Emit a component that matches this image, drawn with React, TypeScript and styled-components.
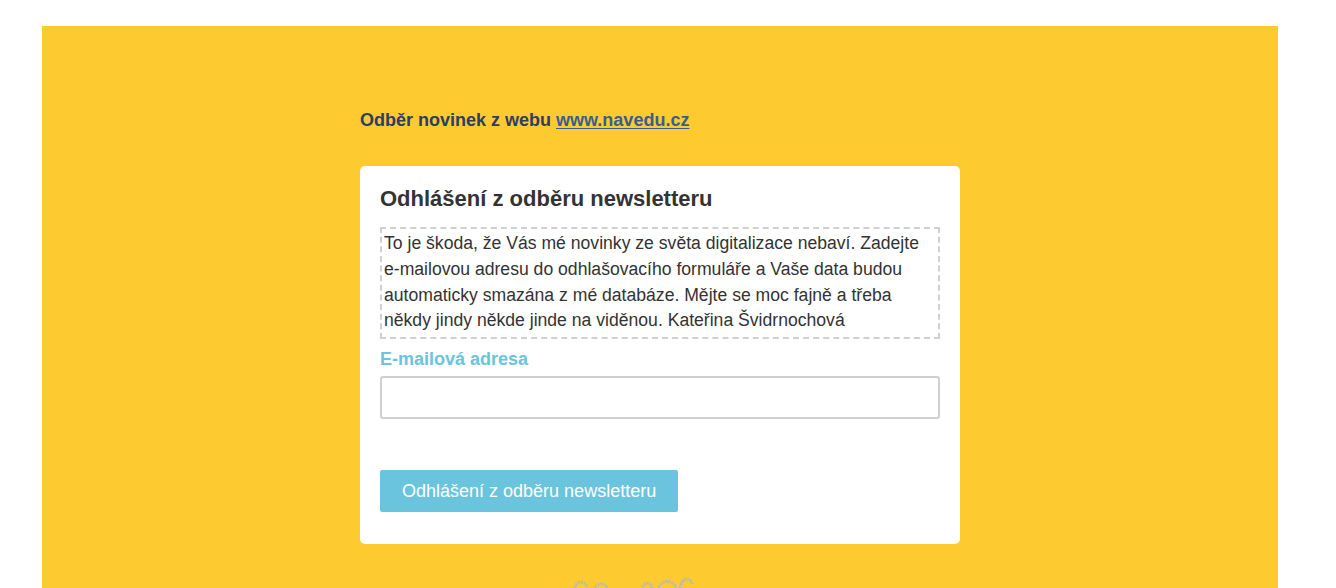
import styled, { createGlobalStyle } from 'styled-components';

const GlobalStyle = createGlobalStyle`
  html, body {
    margin: 0;
    padding: 0;
    background: #ffffff;
    font-family: "Liberation Sans", Arial, Helvetica, sans-serif;
  }
`;

const Page = styled.div`
  padding-top: 26px;
  height: 562px;
  overflow: hidden;
`;
const YellowBand = styled.div`
  margin: 0 58px 0 42px;
  background: #fdcb2f;
  height: 600px;
  display: flex;
  justify-content: center;
`;
const Column = styled.div`
  width: 600px;
  padding-top: 84px;
  display: flex;
  flex-direction: column;
`;
const Intro = styled.p`
  margin: 0 0 35px;
  font-size: 18px;
  line-height: 21px;
  font-weight: bold;
  color: #2e3d63;
  a {
    color: #3a5d91;
    text-decoration: underline;
    text-underline-offset: 2px;
  }
`;
const Card = styled.div`
  background: #ffffff;
  border-radius: 5px;
  padding: 20px 20px 32px;
  box-sizing: border-box;
  h2 {
    margin: 0 0 15px;
    font-size: 22px;
    line-height: 26px;
    color: #333333;
    font-weight: bold;
  }
`;
const Description = styled.div`
  border: 2px dashed #d0d0d0;
  padding: 2px 2px 3px 2px;
  font-size: 17.6px;
  line-height: 25.8px;
  color: #333333;
`;
const Label = styled.label`
  display: block;
  margin-top: 10px;
  font-size: 18px;
  line-height: 20px;
  font-weight: bold;
  color: #6ac4dc;
`;
const EmailInput = styled.input`
  display: block;
  margin-top: 7px;
  width: 100%;
  height: 43px;
  box-sizing: border-box;
  border: 2px solid #cfcfcf;
  border-radius: 3px;
  background: #fff;
`;
const SubmitButton = styled.button`
  align-self: flex-start;
  margin-top: 51px;
  height: 42px;
  padding: 0 22px;
  border: none;
  border-radius: 2px;
  background: #6ac4de;
  color: #ffffff;
  font-family: inherit;
  font-size: 18px;
  cursor: pointer;
`;
const Footer = styled.div`
  display: flex;
  padding-left: 212px;
  margin-top: 24px;
`;

const App = () => {
  return (
    <Page>
      <GlobalStyle />
      <YellowBand>
        <Column>
          <Intro>
            Odběr novinek z webu <a href="#">www.navedu.cz</a>
          </Intro>
          <Card>
            <h2>Odhlášení z odběru newsletteru</h2>
            <Description>
              To je škoda, že Vás mé novinky ze světa digitalizace nebaví. Zadejte e&#8209;mailovou
              adresu do odhlašovacího formuláře a Vaše data budou automaticky smazána z mé
              databáze. Mějte se moc fajně a třeba někdy jindy někde jinde na viděnou. Kateřina
              Švidrnochová
            </Description>
            <Label htmlFor="email">E-mailová adresa</Label>
            <EmailInput id="email" type="email" />
            <SubmitButton>Odhlášení z odběru newsletteru</SubmitButton>
          </Card>
          <Footer>
            <svg width="130" height="30" viewBox="0 0 130 30" fill="none">
              <g stroke="#b9b9b9" strokeWidth="3" strokeDasharray="2 1">
                <path d="M3 20 C4 12 14 12 15 20" />
                <path d="M22 22 C24 14 34 14 36 22" />
                <path d="M70 22 C71 14 78 12 80 20" />
                <path d="M86 22 C88 12 100 10 104 20" />
                <path d="M108 20 C110 10 118 8 120 16" />
              </g>
            </svg>
          </Footer>
        </Column>
      </YellowBand>
    </Page>
  );
};

export default App;
